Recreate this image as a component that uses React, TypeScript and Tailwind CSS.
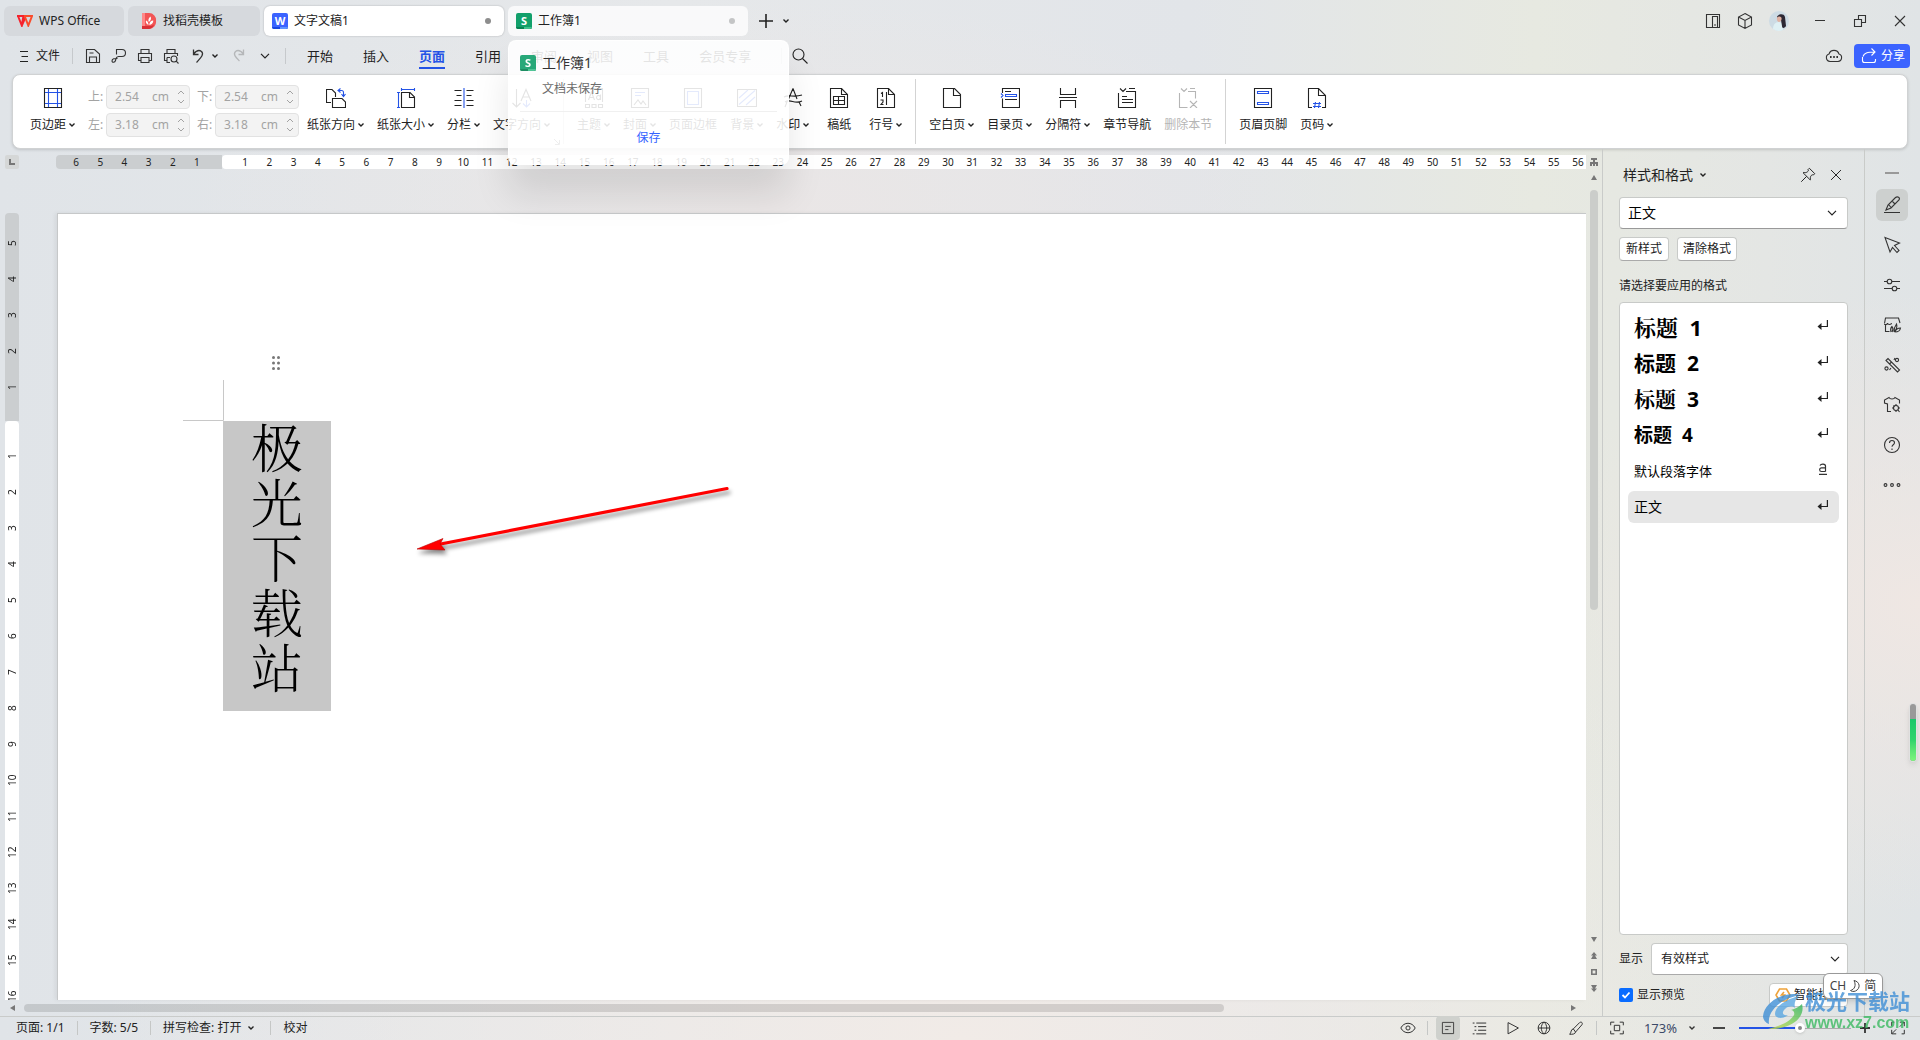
import React from 'react';

const UI_FONT = "[font-family:'Noto_Sans','Noto_Sans_CJK_SC',sans-serif]";

const BLUE = '#2453e6';

type IconProps = { children: React.ReactNode; size?: number; className?: string };

// All line icons share one 20x20 grid
const Icon: React.FC<IconProps> = ({ children, size = 20, className = '' }) => (
  <svg
    width={size}
    height={size}
    viewBox="0 0 20 20"
    fill="none"
    stroke="currentColor"
    strokeWidth="1.1"
    className={`shrink-0 ${className}`}
    aria-hidden="true"
  >
    {children}
  </svg>
);

const Caret: React.FC<{ className?: string }> = ({ className = '' }) => (
  <svg width="6" height="6" viewBox="0 0 6 6" fill="none" stroke="currentColor" strokeWidth="1.4" className={`shrink-0 ${className}`} aria-hidden="true">
    <path d="M0.5 1.5 3 4 5.5 1.5" />
  </svg>
);

const WideCaret: React.FC<{ className?: string }> = ({ className = '' }) => (
  <svg width="10" height="6" viewBox="0 0 10 6" fill="none" stroke="currentColor" strokeWidth="1.2" className={`shrink-0 ${className}`} aria-hidden="true">
    <path d="M1 0.8 5 4.8 9 0.8" />
  </svg>
);

const DocBadge: React.FC<{ letter: string; kind: 'writer' | 'sheet' }> = ({ letter, kind }) => (
  <span
    className={`relative flex size-4 shrink-0 items-center justify-center overflow-hidden rounded-xs text-[11px] leading-4 font-bold text-white ${
      kind === 'writer' ? 'bg-[#3b63ff]' : 'bg-[#12a06b]'
    }`}
  >
    <span className={`absolute bottom-0 left-0 h-0.5 w-full ${kind === 'writer' ? 'bg-[#1846e0]' : 'bg-[#078252]'}`} />
    <span className={`absolute right-0 bottom-0 h-0.5 w-2 ${kind === 'writer' ? 'bg-[#5f93ff]' : 'bg-[#3fc08d]'}`} />
    {letter}
  </span>
);

const TitleBar: React.FC = () => (
  <header className="flex h-[38px] shrink-0 items-center gap-1 pr-[10px] pb-px pl-1 text-xs text-[#222]">
    <button type="button" className="mt-1 flex h-[30px] w-[120px] items-center gap-[6px] rounded-md bg-[#d6d9dd] pl-[13px]">
      <svg width="16" height="12" viewBox="0 0 16 12" fill="none" strokeWidth="2" aria-hidden="true">
        <path d="M0 1h6.5L4.8 10.5 1.2 1.5M4.8 10.5 8.3 2.5" stroke="#f5222d" />
        <path d="M7 1h8L11.3 10.5 8 2" stroke="#fa4b2a" />
      </svg>
      WPS Office
    </button>
    <button type="button" className="mt-1 flex h-[30px] w-[132px] items-center gap-[6px] rounded-md bg-[#d6d9dd] pl-[13px]">
      <svg width="16" height="16" viewBox="0 0 16 16" aria-hidden="true">
        <path d="M1 0h7a7 7 0 0 1 7 8 7 7 0 0 1-7 8H1z" fill="#f25555" />
        <path d="M1 0h3v13H1z" fill="#f88" />
        <path d="M1 13h7a7 7 0 0 0 5-1.5 7 7 0 0 1-5 4.5H1z" fill="#d93036" />
        <path d="M7.5 12C5 11 4.5 9 5 7.5c1.500.5 2.500 2 2.500 4.500M7.800 9C7 7 7.500 5 9.500 3.500c1 2 .500 4-1.700 5.500M8.300 12c0-2.500 1.500-4.500 4-4.500 0 2.500-1.500 4.200-4 4.500" fill="#fff" />
      </svg>
      找稻壳模板
    </button>
    <button type="button" className="mt-1 flex h-[30px] w-60 items-center gap-[6px] rounded-md bg-white pr-[13px] pl-2 shadow-[0_0_2px_rgba(0,0,0,0.25)]">
      <DocBadge letter="W" kind="writer" />
      文字文稿1
      <span className="ml-auto size-[6px] rounded-full bg-[#8d8d8d]" />
    </button>
    <div className="relative mt-1">
      <button type="button" className="flex h-[30px] w-60 items-center gap-[6px] rounded-md bg-white/75 pr-[13px] pl-2">
        <DocBadge letter="S" kind="sheet" />
        工作簿1
        <span className="ml-auto size-[6px] rounded-full bg-[#c4c5c6]" />
      </button>
      <TabPreview />
    </div>
    <button type="button" aria-label="新建" className="mt-1 ml-1">
      <Icon><path d="M10 3v14M3 10h14" strokeWidth="1.6" /></Icon>
    </button>
    <button type="button" aria-label="标签列表" className="mt-1 ml-[3px]"><Caret /></button>

    <div className="mt-1 ml-auto flex items-center text-[#333]">
      <button type="button" aria-label="分屏"><Icon><path d="M3.500 3.500h13v13h-13zM9.500 16.500V5.500h5v11M11 14h2" /></Icon></button>
      <button type="button" aria-label="应用" className="ml-3"><Icon><path d="M10 2.500 16.500 6v8L10 17.500 3.500 14V6zM3.500 6 10 9.500 16.500 6M10 9.500v8" /></Icon></button>
      <button type="button" aria-label="账号" className="ml-[14px]">
        <svg width="20" height="20" viewBox="0 0 20 20" aria-hidden="true">
          <circle cx="10" cy="10" r="10" fill="#cddbe4" />
          <path d="M4 18c0-4 2-7 6-7l3 1 1 7a10 10 0 0 1-10-1" fill="#dff0f4" />
          <path d="M8 6c1-3 7-4 8 0l1 9c-1 2-4 3-4 0l-1-6-4-1z" fill="#2c2733" />
          <path d="M8 6.500c1-1.500 4-1.500 4.500.5s-1 4-2.500 4-2.500-2-2-4.500" fill="#e0b3a4" />
        </svg>
      </button>
      <button type="button" aria-label="最小化" className="ml-[21px]"><Icon><path d="M5 9.500h10" strokeWidth="1" /></Icon></button>
      <button type="button" aria-label="还原" className="ml-5"><Icon><path d="M4.500 8.500h7v7h-7zM8.500 8V4.500h7v7H12" /></Icon></button>
      <button type="button" aria-label="关闭" className="ml-5"><Icon><path d="m5 5 10 10M15 5 5 15" /></Icon></button>
    </div>
  </header>
);

// Hover card of the spreadsheet tab, slightly see-through
const TabPreview: React.FC = () => (
  <div className="absolute top-full left-0 z-20 mt-1 w-[281px] rounded-lg border border-white/80 bg-white/88 px-[11px] pt-[14px] pb-[18px] shadow-[0_30px_36px_rgba(0,0,0,0.1)]">
    <div className="flex items-center gap-[6px] text-sm leading-4 text-[#333]">
      <span className="opacity-90"><DocBadge letter="S" kind="sheet" /></span>
      工作簿1
    </div>
    <p className="mt-[10px] pl-[22px] text-xs leading-4 text-[#6b6b6b]">文档未保存</p>
    <hr className="mt-[14px] border-[#f0f0f0]" />
    <button type="button" className="mt-[18px] block w-full text-center text-xs leading-4 text-[#3563ff]">保存</button>
  </div>
);

const MENU_TABS = ['开始', '插入', '页面', '引用', '审阅', '视图', '工具', '会员专享'];

const MenuBar: React.FC = () => (
  <nav className="flex h-9 shrink-0 items-center pr-[10px] pb-px pl-[14px] text-[#222]">
    <button type="button" className="flex items-center gap-[2px] text-xs">
      <Icon><path d="M6 5.500h8M7.500 10.500h6.500M6 15.500h8" strokeWidth="1" /></Icon>
      文件
    </button>
    <span className="ml-3 h-4 w-px bg-[#c6c9cc]" />
    <div className="ml-[10px] flex items-center gap-[6px] text-[#333]">
      <button type="button" aria-label="保存"><Icon><path d="M3.500 16.500v-13h8l5 4.500v8.500zM6.500 16.500v-5.500h7v5.500M6.500 7h4" /></Icon></button>
      <button type="button" aria-label="输出为PDF"><Icon><path d="M7.500 8.500V3.500h5.500a3.500 3.500 0 0 1 0 7H9.500a3 3 0 0 0-2.500 2l-.5 2c-.5 2-3.500 2.500-3.500.5 0-3 3.500-2.500 5.500-2.500" /></Icon></button>
      <button type="button" aria-label="打印"><Icon><path d="M6 7.500v-4h8v4M6 14.500H3.500v-7h13v7H14M6 11.500h8v5H6z" /></Icon></button>
      <button type="button" aria-label="打印预览"><Icon><path d="M6 7.500v-4h8v4M6 14.500H3.500v-7h13v2.500M6 11.500h3M6 11.500v5h3" /><circle cx="13" cy="13" r="3" /><path d="m15.200 15.200 2.300 2.300" /></Icon></button>
    </div>
    <button type="button" aria-label="撤销" className="ml-[7px] text-[#333]"><Icon><path d="M5.500 3.500v5h5M5.500 8C8 5 11 3.500 13.500 5.500c3 3-1 6.500-5 11" strokeWidth="1.300" /></Icon></button>
    <button type="button" aria-label="撤销列表" className="ml-1"><Caret /></button>
    <button type="button" aria-label="恢复" className="ml-[11px] text-[#b5b7b9]"><Icon><path d="M14.500 3.500v5h-5M14.500 8C12 5 9 3.500 6.500 5.500c-3 3 1 6.500 4 9.500" strokeWidth="1.300" /></Icon></button>
    <button type="button" aria-label="更多" className="ml-[11px]"><WideCaret /></button>
    <span className="ml-[15px] h-4 w-px bg-[#c6c9cc]" />
    <div className="ml-[21px] flex gap-[30px] text-[13px] leading-5">
      {MENU_TABS.map((tab) => (
        <button
          key={tab}
          type="button"
          className={
            tab === '页面'
              ? 'mt-[3px] border-b-2 border-[#2453e6] pb-px font-bold text-[#2453e6]'
              : 'mt-[3px] border-b-2 border-transparent pb-px'
          }
        >
          {tab}
        </button>
      ))}
    </div>
    <span className="ml-[30px] h-4 w-px bg-[#c6c9cc]" />
    <button type="button" aria-label="搜索" className="ml-2"><Icon><circle cx="8.500" cy="8.500" r="5.500" /><path d="m12.500 12.500 5 5" /></Icon></button>

    <button type="button" aria-label="云文档" className="ml-auto text-[#333]">
      <Icon><path d="M6 15.500h8a3.800 3.800 0 0 0 1-7.400 5.200 5.200 0 0 0-10 0 3.800 3.800 0 0 0 1 7.400z" /><path d="M6 11h1.600M9.200 11h1.600M12.400 11H14" strokeWidth="1.800" /></Icon>
    </button>
    <button type="button" className="ml-[10px] flex h-6 w-14 items-center justify-center gap-[2px] rounded-sm bg-[#3b63ff] text-xs text-white">
      <Icon><path d="M3.500 11v3.500a2 2 0 0 0 2 2h9a2 2 0 0 0 2-2V13M4 10.500c1-3.500 4-4.500 12-4.500M12.500 2.500 16 6l-3.500 3.500" /></Icon>
      分享
    </button>
  </nav>
);

type ToolProps = { label: string; caret?: boolean; disabled?: boolean; className?: string; children: React.ReactNode };

const Tool: React.FC<ToolProps> = ({ label, caret = false, disabled = false, className = '', children }) => (
  <button
    type="button"
    disabled={disabled}
    className={`flex shrink-0 flex-col items-center gap-[9px] pt-[9px] text-xs leading-4 ${disabled ? 'text-[#b5b5b5]' : 'text-[#222]'} ${className}`}
  >
    <Icon>{children}</Icon>
    <span className="flex items-center gap-[3px] whitespace-nowrap">
      {label}
      {caret && <Caret />}
    </span>
  </button>
);

const MarginField: React.FC<{ label: string; value: string }> = ({ label, value }) => (
  <label className="flex items-center gap-1 text-xs leading-4 text-[#a3a3a3]">
    <span className="w-[14px] whitespace-nowrap">{label}:</span>
    <span className="flex h-6 w-[84px] items-center rounded-sm border border-[#e2e2e2] bg-[#f3f3f3] pr-1 pl-2">
      <input type="text" defaultValue={value} disabled className="w-[37px] bg-transparent" />
      cm
      <svg width="8" height="18" viewBox="0 0 8 18" fill="none" stroke="currentColor" className="ml-auto" aria-hidden="true">
        <path d="M1 6l3-3 3 3M1 12l3 3 3-3" />
      </svg>
    </span>
  </label>
);

const Divider: React.FC = () => <span className="w-px shrink-0 self-stretch bg-[#d3d3d3]" />;

const PAGE_SHAPE = 'M1.500.500h11l6 6v13h-17z';

const Ribbon: React.FC = () => (
  <section className="mx-3 flex h-[75px] shrink-0 items-start gap-[13px] rounded-lg border border-[#d0d2d3] bg-white py-1 pl-[17px] shadow-[0_1px_3px_rgba(0,0,0,0.15)]">
    <Tool label="页边距" caret>
      <path d="M1.500.500h17v19h-17z" />
      <path d="M5.500 1v18M14.500 1v18M2 4.500h16M2 15.500h16" stroke={BLUE} />
    </Tool>
    <div className="-mr-[5px] grid grid-cols-2 gap-x-[7px] gap-y-1 pt-[6px]">
      <MarginField label="上" value="2.54" />
      <MarginField label="下" value="2.54" />
      <MarginField label="左" value="3.18" />
      <MarginField label="右" value="3.18" />
    </div>
    <Tool label="纸张方向" caret>
      <path d="M5 14.500H.500V1.500h5.500l3.500 3.500v4" />
      <path d="M6.500 10.500h9.500l3.500 3.500v5.500h-13z" />
      <path d="M12 2.500h3.500a2 2 0 0 1 2 2v3.500M14.500.500l-2.500 2 2.500 2M15.500 6l2 2.500 2-2.500" stroke={BLUE} />
    </Tool>
    <Tool label="纸张大小" caret>
      <path d="M5.500 4.500h8.500l4.500 4.500v10.500h-13zM13.500 4.500v5h5" />
      <path d="M5.500 1.500h13M5.500 0v3M18.500 0v3M2.500 4.500v15M1 4.500h3M1 19.500h3" stroke={BLUE} />
    </Tool>
    <Tool label="分栏" caret>
      <path d="M.500 2.500h7M2.500 7.500h5M.500 12.500h7M.500 17.500h7M12.500 2.500h7M12.500 7.500h5M12.500 12.500h7M12.500 17.500h7" />
      <path d="M10 0v20" stroke={BLUE} />
    </Tool>
    <div className="relative">
      <Tool label="文字方向" caret>
        <path d="M4.500 1v18M.500 15l4 4 4-4M9 13l5-11.500L19 13M11 9h6" />
        <path d="M14.500 12v7M11 15.500l3.500 3.500 3.500-3.500" stroke={BLUE} />
      </Tool>
      <svg width="6" height="6" viewBox="0 0 6 6" fill="none" stroke="#777" className="absolute -right-[10px] -bottom-3" aria-hidden="true">
        <path d="M0 0l5 5M5.500 1v4.500H1" />
      </svg>
    </div>
    <Divider />
    <Tool label="主题" caret>
      <path d="M1.500 14V.500h17V14M1.500 16.500h4v3h-4zM8 16.500h4v3H8zM14.500 16.500h4v3h-4zM4.500 12l3-8 3 8M5.500 9.500h4" />
      <path d="M16.500 6.500V12M16.500 9.500a2 2 0 1 0 0 .1" />
    </Tool>
    <Tool label="封面" caret>
      <path d="M1.500.500h17v19h-17zM4 17l4-5 3 4 2-3 3 4" />
      <path d="M5 4.500h10M5 7.500h6" stroke={BLUE} />
    </Tool>
    <Tool label="页面边框">
      <path d="M1.500.500h17v19h-17z" />
      <path d="M4.500 3.500h11v13h-11z" stroke={BLUE} />
    </Tool>
    <Tool label="背景" caret>
      <path d="M.500 1.500h19v17H.500z" />
      <path d="M2 10 11 2M2 16.500 18 2.500M9 17l9-8" stroke={BLUE} />
    </Tool>
    <Tool label="水印" caret>
      <path d="M10 .500 5.500 11M10 .500 14 11M1 9c5-3 9 1 18-2M2 14c6-4 9 3 17-1M4 14l-2 5M16 14l2 4" />
    </Tool>
    <Tool label="稿纸" className="mx-[5px]">
      <path d={PAGE_SHAPE} />
      <path d="M12.500.500v6h6M4.500 8.500h11v8h-11zM4.500 12.500h11M9.500 8.500v8" />
    </Tool>
    <Tool label="行号" caret>
      <path d={PAGE_SHAPE} />
      <path d="M12.500.500v6h6M10.500 4v13M5 5.500l1.500-1V9M4.500 12h2.500v2L5 16.500h2.500" />
    </Tool>
    <Divider />
    <Tool label="空白页" caret>
      <path d={PAGE_SHAPE} />
      <path d="M11.500.500v7h7" />
    </Tool>
    <Tool label="目录页" caret>
      <path d="M2.500 5V.500h17v19h-17v-9M5 3.500h6M5 11.500h12" />
      <path d="M5.500 6.500h11v2h-11zM1 5.500l2 2-2 2" stroke={BLUE} />
    </Tool>
    <Tool label="分隔符" caret>
      <path d="M2.500 0v6.500h15V0M2.500 20v-7.500h15V20M1 9.500h18" />
    </Tool>
    <Tool label="章节导航">
      <path d="M1.500 5v14.500h17V3.500H9M12 .500h6M3 .500l3 3 3-3M5 8.500h5M5 11.500h11M5 14.500h11" />
    </Tool>
    <Tool label="删除本节" disabled>
      <path d="M1.500 5v14.500h8M10 3.500h7.500v7M12 .500h5M3 .500l3 3 3-3M12 13l7 7M19 13l-7 7" />
    </Tool>
    <Divider />
    <Tool label="页眉页脚">
      <path d="M1.500.500h17v19h-17z" />
      <path d="M4.500 3.500h11v2h-11zM4.500 14.500h11v2h-11z" stroke={BLUE} />
    </Tool>
    <Tool label="页码" caret>
      <path d="M5 19.500H1.500V.500h10l7 7v12H15M11.500.500v7h7" />
      <path d="M8.500 14l-1 6M12.500 14l-1 6M6 15.500h8M6 18.500h8" stroke={BLUE} />
    </Tool>
  </section>
);

const range = (from: number, to: number) =>
  Array.from({ length: Math.abs(to - from) + 1 }, (_, i) => (from < to ? from + i : from - i));

const HorizontalRuler: React.FC = () => (
  <div className="flex h-[14px] shrink-0 pl-[5px] text-[10px] leading-[14px] text-[#222]">
    <span className="flex size-[14px] items-center justify-center rounded-xs bg-[#d5d7d7]">
      <svg width="6" height="6" viewBox="0 0 6 6" fill="none" stroke="#777" strokeWidth="2" aria-hidden="true"><path d="M1 0v5h5" /></svg>
    </span>
    <div className="ml-[37px] flex w-[166px] rounded-l-sm bg-[#cbced0] pr-[13px] pl-2">
      {range(6, 1).map((n) => (
        <span key={n} className="flex-1 text-center">{n}</span>
      ))}
    </div>
    <div className="min-w-0 flex-1 overflow-hidden rounded-l-sm bg-white">
      <div className="-mr-1 flex pl-[11px]">
        {range(1, 56).map((n) => (
          <span key={n} className="min-w-0 flex-1 text-center">{n}</span>
        ))}
      </div>
    </div>
  </div>
);

const VerticalRuler: React.FC = () => (
  <div className="flex w-[14px] shrink-0 flex-col overflow-hidden text-[10px] leading-[14px] text-[#222]">
    <div className="shrink-0 rounded-t-sm bg-[#cbced0] pt-3 pb-4">
      {range(5, 1).map((n) => (
        <span key={n} className="block h-9 rotate-180 text-center [writing-mode:vertical-rl]">{n}</span>
      ))}
    </div>
    <div className="min-h-0 flex-1 overflow-hidden rounded-t-sm bg-white pt-[17px]">
      {range(1, 16).map((n) => (
        <span key={n} className="block h-9 rotate-180 text-center [writing-mode:vertical-rl]">{n}</span>
      ))}
    </div>
  </div>
);

const DocumentPage: React.FC = () => (
  <div className="relative ml-[38px] min-w-0 flex-1 overflow-hidden border-t border-l border-[#c6c8c9] bg-white pt-[207px] pl-[165px] shadow-[-2px_0_4px_rgba(0,0,0,0.06)]">
    <svg width="180" height="90" viewBox="0 0 180 90" className="absolute top-[142px] left-[124px]" aria-hidden="true">
      <path d="M41.500 24v40.500H1" fill="none" stroke="#c8c8c8" />
      <g fill="#777">
        <circle cx="91.500" cy="1.500" r="1.500" /><circle cx="96.500" cy="1.500" r="1.500" />
        <circle cx="91.500" cy="7" r="1.500" /><circle cx="96.500" cy="7" r="1.500" />
        <circle cx="91.500" cy="12.500" r="1.500" /><circle cx="96.500" cy="12.500" r="1.500" />
      </g>
    </svg>
    <div className="flex h-[290px] w-[108px] justify-center bg-[#c7c7c7]">
      <p className="-mt-[3px] text-[52px] leading-[55px] font-light text-black [font-family:'Noto_Serif_CJK_SC','Noto_Sans_CJK_SC',serif]">
        {'极光下载站'.split('').map((ch) => (
          <span key={ch} className="block">{ch}</span>
        ))}
      </p>
    </div>
    <svg width="330" height="90" viewBox="0 0 330 90" className="absolute top-[266px] left-[352px] drop-shadow-[2px_4px_2px_rgba(0,0,0,0.45)]" aria-hidden="true">
      <path d="M28 64.500 317 8.500" stroke="#f00" strokeWidth="3.200" strokeLinecap="round" />
      <path d="M7 69 33 58.500 30 64 35 70z" fill="#f00" stroke="#b00" strokeWidth="0.6" />
    </svg>
  </div>
);

const VerticalScroll: React.FC = () => (
  <div className="flex w-4 shrink-0 flex-col items-center pt-[9px] text-[#777]">
    <svg width="8" height="8" viewBox="0 0 8 8" fill="currentColor" aria-hidden="true"><path d="M1 0h6v2H5v2h3v4H6V6H5v2H3V6H2v2H0V4h3V2H1z" /></svg>
    <svg width="6" height="5" viewBox="0 0 6 5" fill="currentColor" className="mt-[9px]" aria-hidden="true"><path d="M3 0l3 5H0z" /></svg>
    <div className="mt-[10px] h-[420px] w-2 rounded-full bg-[#cbcdca]" />
    <svg width="6" height="5" viewBox="0 0 6 5" fill="currentColor" className="mt-auto" aria-hidden="true"><path d="M3 5l3-5H0z" /></svg>
    <svg width="6" height="8" viewBox="0 0 6 8" fill="currentColor" className="mt-[10px]" aria-hidden="true"><path d="M3 0l3 3.500H4L6 7H0l2-3.500H0z" /></svg>
    <svg width="6" height="6" viewBox="0 0 6 6" fill="none" stroke="currentColor" strokeWidth="1.600" className="mt-[9px]" aria-hidden="true"><path d="M.800.800h4.400v4.400H.800z" /></svg>
    <svg width="6" height="8" viewBox="0 0 6 8" fill="currentColor" className="mt-[9px] mb-6" aria-hidden="true"><path d="M3 8l3-3.500H4L6 1H0l2 3.500H0z" /></svg>
  </div>
);

const STYLES = [
  { name: '标题  1', cls: "text-[22px] font-bold [font-family:'Noto_Sans','Noto_Serif_CJK_SC',serif]" },
  { name: '标题  2', cls: 'text-[21px] font-bold' },
  { name: '标题  3', cls: "text-[21px] font-bold [font-family:'Noto_Sans','Noto_Serif_CJK_SC',serif]" },
  { name: '标题  4', cls: 'text-[19px] font-bold' },
  { name: '默认段落字体', cls: 'text-[13px]' },
  { name: '正文', cls: 'text-sm' },
];

const StylePanel: React.FC = () => (
  <aside className="flex w-[263px] shrink-0 flex-col border-x border-[#c9cbc9] px-4 pb-[9px] text-xs leading-4 text-[#222]">
    <div className="flex items-center pt-4 pl-1">
      <h2 className="flex items-center gap-[7px] text-sm leading-5">样式和格式 <Caret /></h2>
      <button type="button" aria-label="固定" className="ml-auto"><Icon size={18}><path d="M11.500 2.500 17.500 8.500 16 10c-1.500-.5-2 0-3 1.500-1 1.500.5 3-.5 4L4.500 7.500c1-1 2.500.5 4-.5S11 5.500 10 4zM8.500 11.500l-6 6" /></Icon></button>
      <button type="button" aria-label="关闭面板" className="mr-[3px] ml-[10px]"><Icon size={18}><path d="m4.500 4.500 11 11M15.500 4.500l-11 11" /></Icon></button>
    </div>
    <div className="relative mt-3">
      <select aria-label="当前样式" className="h-8 w-full appearance-none rounded-sm border border-[#c8cac8] border-b-[#999] bg-white pl-2 text-sm text-black">
        <option>正文</option>
      </select>
      <WideCaret className="pointer-events-none absolute top-[13px] right-[11px]" />
    </div>
    <div className="mt-2 flex gap-2">
      <button type="button" className="h-6 w-[50px] rounded-sm border border-[#c8cac8] border-b-[#aaa] bg-white">新样式</button>
      <button type="button" className="h-6 w-[60px] rounded-sm border border-[#c8cac8] border-b-[#aaa] bg-white">清除格式</button>
    </div>
    <p className="mt-[17px]">请选择要应用的格式</p>
    <ul className="mt-2 flex min-h-0 flex-1 flex-col gap-1 rounded-sm border border-[#c8cac8] bg-white p-2 text-black">
      {STYLES.map((s) => (
        <li key={s.name}>
          <button
            type="button"
            className={`flex h-8 w-full items-center justify-between rounded-md pr-[11px] pl-[6px] whitespace-pre ${s.name === '正文' ? 'bg-[#e6e6e6]' : ''}`}
          >
            <span className={s.cls}>{s.name}</span>
            {s.name === '默认段落字体' ? (
              <svg width="10" height="12" viewBox="0 0 10 12" fill="none" stroke="#333" strokeWidth="1.200" className="mb-1" aria-hidden="true">
                <path d="M2 2.500C3 .500 7.500.500 7.500 3v5.500M7.500 4.800H3.500a1.800 1.800 0 0 0 0 3.700h4M1 11.400h8" />
              </svg>
            ) : (
              <svg width="11" height="10" viewBox="0 0 11 10" fill="none" stroke="#222" strokeWidth="1.200" className="mb-1" aria-hidden="true">
                <path d="M10.400 0v6.500H2" />
                <path d="M4.500 3v7L.500 6.500z" fill="#222" stroke="none" />
              </svg>
            )}
          </button>
        </li>
      ))}
    </ul>
    <div className="mt-2 flex items-center justify-between">
      <label htmlFor="style-filter">显示</label>
      <div className="relative w-[197px]">
        <select id="style-filter" className="h-8 w-full appearance-none rounded-sm border border-[#c8cac8] border-b-[#aaa] bg-white pl-[9px] text-xs">
          <option>有效样式</option>
        </select>
        <WideCaret className="pointer-events-none absolute top-[13px] right-2" />
      </div>
    </div>
    <div className="mt-2 flex items-center justify-between">
      <label className="flex items-center gap-1">
        <span className="relative flex">
          <input type="checkbox" defaultChecked className="size-[14px] appearance-none rounded-xs bg-[#0a6cff]" />
          <svg width="14" height="14" viewBox="0 0 14 14" fill="none" stroke="#fff" strokeWidth="1.800" className="pointer-events-none absolute inset-0" aria-hidden="true"><path d="M3.500 7 6 9.500l4.500-5" /></svg>
        </span>
        显示预览
      </label>
      <button type="button" className="flex h-6 w-[79px] items-center gap-[3px] rounded-sm border border-[#c8cac8] bg-white pl-[5px] whitespace-nowrap">
        <svg width="16" height="16" viewBox="0 0 16 16" fill="none" stroke="#eea23a" strokeWidth="1.600" aria-hidden="true"><path d="M4.500 2h7L15 8l-3.500 6h-7L1 8zM9 5 6.500 8h3L7 11" /></svg>
        智能排版
      </button>
    </div>
  </aside>
);

const SideRail: React.FC = () => (
  <div className="flex w-[55px] shrink-0 flex-col items-center gap-2 pt-[23px] pr-px text-[#333]">
    <span className="mb-[7px] h-0.5 w-[14px] bg-[#999]" />
    <button type="button" aria-label="样式" className="flex size-8 items-center justify-center rounded-md bg-[#cdd0cf]"><Icon><path d="M2 17.500h16M4 15l2-5 7.500-7.500c2-1.500 5 0 3.500 2.500L9 13zM6.500 9.500 9.500 13M10 6l3 3" /></Icon></button>
    <button type="button" aria-label="选择" className="flex size-8 items-center justify-center"><Icon><path d="M3 2.500 17.500 8l-5 2.500 4.500 5-2 2-4.500-5L8 17z" /></Icon></button>
    <button type="button" aria-label="属性" className="flex size-8 items-center justify-center"><Icon><path d="M2 6.500h3M10 6.500h8M2 13.500h8M15 13.500h3" /><circle cx="7.500" cy="6.500" r="2.300" /><circle cx="12.500" cy="13.500" r="2.300" /></Icon></button>
    <button type="button" aria-label="素材" className="flex size-8 items-center justify-center"><Icon><path d="M2.500 9c0 1 3 1 3-1 0 2 4 2 4 0M2.500 8.500 3.500 3h13l1.500 5M3.500 10v6.500h4M9 17c-1-3-.5-4 1-5.500 1.500 2 1 4 0 5.500M12 17c0-4 1-6 2.500-8 1 3 .5 5-2.500 8M13 17c1-3 3-4 5.500-4-.5 3-2 4-5.500 4" /></Icon></button>
    <button type="button" aria-label="工具" className="flex size-8 items-center justify-center"><Icon><path d="M4 5.500 6 3.500 17.500 15l-2 2zM7.500 9l2-2" /><circle cx="15" cy="5" r="1.600" /><circle cx="4.500" cy="13.500" r="1.600" /><path d="m9 13-1.500 2M12 5l1-2" /></Icon></button>
    <button type="button" aria-label="皮肤" className="flex size-8 items-center justify-center"><Icon><path d="M9 16.500H5.500V9L2.500 8V5L7 2.500c1 2 5 2 6 0L17.500 5v3.500" /><circle cx="14" cy="13" r="2.500" /><path d="M14 9v1.500M14 15.500V17M10 13h1.500M16.500 13H18M11.500 10.500l1 1M16 15l1.500 2" /></Icon></button>
    <button type="button" aria-label="帮助" className="flex size-8 items-center justify-center"><Icon><circle cx="10" cy="10" r="7.500" /><path d="M7.500 8c0-3.500 5-3.200 5-.3 0 2-2.500 2-2.500 4M10 13.500V15" /></Icon></button>
    <button type="button" aria-label="更多" className="flex size-8 items-center justify-center"><Icon><circle cx="3.500" cy="10" r="1.400" /><circle cx="10" cy="10" r="1.400" /><circle cx="16.500" cy="10" r="1.400" /></Icon></button>
  </div>
);

const StatusBar: React.FC = () => (
  <footer className="flex h-6 shrink-0 items-center border-t border-[#c9cbca] pr-[13px] pb-px pl-4 text-xs leading-4 text-[#222]">
    <span>页面: 1/1</span>
    <span className="mx-3 h-[14px] w-px bg-[#c5c7c6]" />
    <span>字数: 5/5</span>
    <span className="mx-3 h-[14px] w-px bg-[#c5c7c6]" />
    <button type="button" className="flex items-center gap-[7px]">拼写检查: 打开 <Caret /></button>
    <span className="mr-3 ml-4 h-[14px] w-px bg-[#c5c7c6]" />
    <button type="button">校对</button>

    <div className="ml-auto flex items-center text-[#333]">
      <button type="button" aria-label="护眼模式"><Icon size={18}><path d="M2 10c3.500-7 12.500-7 16 0-3.500 7-12.500 7-16 0z" /><circle cx="10" cy="10" r="2.300" /></Icon></button>
      <span className="mr-2 ml-[10px] h-[14px] w-px bg-[#c5c7c6]" />
      <button type="button" aria-label="页面视图" className="flex size-6 items-center justify-center rounded-sm bg-[#cfd1cd]"><Icon size={16}><path d="M3 3h14v14H3zM6.500 8h7M6.500 12h4" /></Icon></button>
      <button type="button" aria-label="大纲" className="ml-[10px]"><Icon size={18}><path d="M3 4.500h2M7 4.500h11M5 8.500h2M9 8.500h9M5 12.500h2M9 12.500h9M3 16.500h2M7 16.500h11" /></Icon></button>
      <button type="button" aria-label="阅读" className="ml-4"><Icon size={18}><path d="M4.500 4v12.500L16 10z" /></Icon></button>
      <button type="button" aria-label="Web版式" className="ml-[13px]"><Icon size={18}><circle cx="10" cy="10" r="6.500" /><path d="M3.500 10h13M10 3.500c-4 3-4 10 0 13 4-3 4-10 0-13" /></Icon></button>
      <button type="button" aria-label="写作" className="ml-[14px]"><Icon size={18}><path d="M3 17c3 0 6 0 6.500-2.500L7 11C4 11.500 5 15 3 17zM7 11l7-7c2-1.500 4 .5 2.500 2.500l-7 8" /></Icon></button>
      <span className="mx-[11px] h-[14px] w-px bg-[#c5c7c6]" />
      <button type="button" aria-label="适合页面"><Icon size={18}><path d="M3 7V3.500h4M13 3.500h4V7M17 13v3.500h-4M7 16.500H3V13M7 7h6v6H7z" /></Icon></button>
      <button type="button" className="ml-[18px] flex items-center gap-3 text-[13px] text-[#3c4a68]">173% <Caret className="text-[#333]" /></button>
      <button type="button" aria-label="缩小" className="ml-[14px]"><Icon><path d="M4 10h12" strokeWidth="1.800" /></Icon></button>
      <div className="relative ml-[10px] flex h-4 w-28 items-center">
        <span className="h-0.5 w-[61px] bg-[#2453e6]" />
        <span className="h-px flex-1 bg-[#aaa]" />
        <span className="pointer-events-none absolute left-14 size-[10px] rounded-full border-3 border-white bg-[#888] shadow" />
        <input type="range" aria-label="缩放" min={10} max={500} defaultValue={173} className="absolute inset-0 w-full opacity-0" />
      </div>
      <button type="button" aria-label="放大" className="ml-1"><Icon><path d="M10 5v10M5 10h10" strokeWidth="1.800" /></Icon></button>
      <button type="button" aria-label="全屏" className="ml-[14px]"><Icon size={18}><path d="M12 3.500h5V8M17 3.500l-5 5M3 12v4.500h5M3 16.500l5-5M3 8V3.500h3M17 12v4.500h-3" /></Icon></button>
    </div>
  </footer>
);

const ImePopup: React.FC = () => (
  <div className="absolute right-[37px] bottom-[41px] z-20 flex h-[26px] w-[60px] items-center justify-center gap-1 rounded-md border border-[#999] bg-white text-xs leading-4 text-[#444] shadow-md">
    CH
    <svg width="10" height="12" viewBox="0 0 10 12" fill="none" stroke="currentColor" aria-hidden="true"><path d="M4 .500c6 1 7 8 1.500 10.500-2 .8-4 .5-5-.5 4-1 6-5 3.500-10z" /></svg>
    简
  </div>
);

const Watermark: React.FC = () => (
  <div className="pointer-events-none absolute right-[10px] bottom-[7px] z-30 flex items-end opacity-80">
    <svg width="44" height="42" viewBox="0 0 44 42" aria-hidden="true">
      <defs>
        <linearGradient id="swirl-green" x1="0" y1="1" x2="1" y2="0">
          <stop offset="0" stopColor="#cfd84a" />
          <stop offset="0.5" stopColor="#7fd05a" />
          <stop offset="1" stopColor="#2fb35e" />
        </linearGradient>
      </defs>
      <path d="M40 4C24 0 4 10 2 25c0 4 3 7 6 8C6 20 20 7 40 4z" fill="#3f8fd6" />
      <path d="M38 5C26 8 14 15 14 23c0 5 9 5 13 1-5 1-7-2-3-6 3-3 8-3 10-1-1-5 0-8 4-12z" fill="#5ba7e2" />
      <path d="M41 13c4 14-12 26-34 25 12-3 22-7 26-14 1-3-1-5-3-5 4-1 8-3 11-6z" fill="url(#swirl-green)" />
    </svg>
    <div className="flex flex-col">
      <span className="text-[21px] leading-6 font-bold text-[#3f8fd6]">极光下载站</span>
      <span className="text-base leading-5 font-bold text-[#3dba62] [font-family:'Liberation_Sans',sans-serif]">www.xz7.com</span>
    </div>
  </div>
);

const App: React.FC = () => {
  return (
    <div
      className={`relative flex h-screen flex-col overflow-hidden bg-[radial-gradient(ellipse_45%_50%_at_50%_100%,#f1ebe7,transparent),radial-gradient(ellipse_20%_30%_at_100%_58%,#efe7e3,transparent),radial-gradient(ellipse_30%_20%_at_40%_20%,#eae6e6,transparent),linear-gradient(90deg,#e0e4e8,#e6e8ea_35%,#e2e5e9_62%,#e7e9e1_80%,#e4e6e4_92%,#e0e4e6)] ${UI_FONT}`}
    >
      <TitleBar />
      <MenuBar />
      <Ribbon />
      <div className="flex min-h-0 flex-1">
        <main className="flex min-w-0 flex-1 flex-col pt-[6px]">
          <HorizontalRuler />
          <div className="mt-[44px] flex min-h-0 flex-1 pl-[5px]">
            <VerticalRuler />
            <DocumentPage />
          </div>
          <div className="flex h-4 shrink-0 items-center px-[10px]">
            <svg width="5" height="6" viewBox="0 0 5 6" fill="#777" aria-hidden="true"><path d="M5 0v6L0 3z" /></svg>
            <div className="mx-[9px] flex-1">
              <div className="h-2 w-[78%] rounded-full bg-black/12" />
            </div>
            <svg width="5" height="6" viewBox="0 0 5 6" fill="#777" aria-hidden="true"><path d="M0 0v6l5-3z" /></svg>
          </div>
        </main>
        <VerticalScroll />
        <StylePanel />
        <SideRail />
      </div>
      <StatusBar />

      {/* Floating desktop widgets */}
      <div className="absolute right-[3px] bottom-[278px] z-20 flex h-[59px] w-2 flex-col overflow-hidden rounded-full border border-white/70 bg-[#999] shadow-md">
        <div className="mt-[15px] flex-1 bg-linear-to-b from-[#19c86a] via-[#2fd46c] to-[#7cf57c]" />
      </div>
      <ImePopup />
      <Watermark />
    </div>
  );
};

export default App;
